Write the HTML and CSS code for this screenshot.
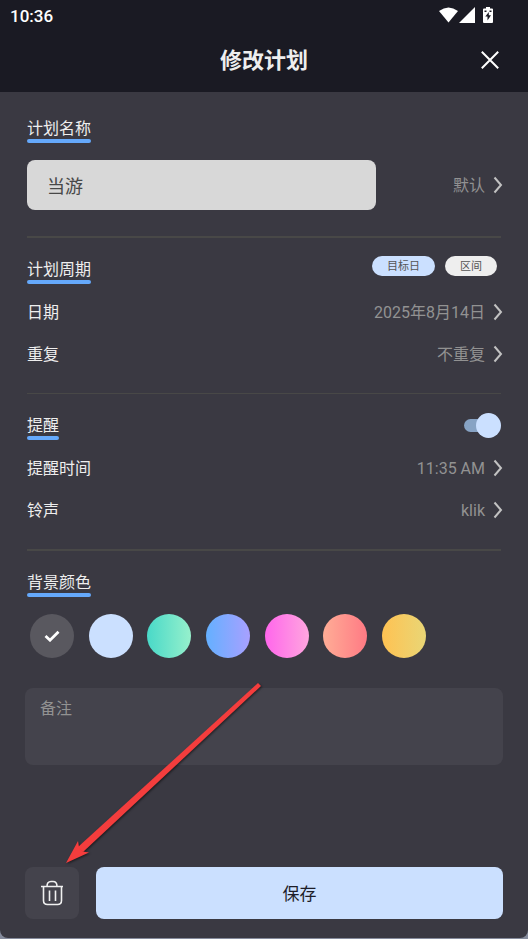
FILE: index.html
```html
<!DOCTYPE html>
<html lang="zh-CN">
<head>
<meta charset="utf-8">
<meta name="viewport" content="width=device-width, initial-scale=1">
<title>修改计划</title>
<link rel="stylesheet" href="styles.css">
</head>
<body>
<svg class="defs" aria-hidden="true"><symbol id="chevron" viewBox="0 0 10 18"><path d="M1.5 1.5 8 9 1.5 16.500" fill="none" stroke="currentColor" stroke-width="2"/></symbol></svg>
<div class="screen">
  <header class="header">
    <div class="status">
      <span class="clock">10:36</span>
      <svg class="status-icons" viewBox="0 0 56 18" aria-hidden="true">
        <g fill="#fff">
          <path d="M0 4Q9.500-3 19 4L9.500 15.500Z"/>
          <path d="M20 16 36 0V16Z"/>
          <path d="M47 0h4v1.500h2q1 0 1 1V15q0 1-1 1h-8q-1 0-1-1V2.500q0-1 1-1h2Z"/>
        </g>
        <path d="M49.800 5 46.300 9.500h2.200v4l3.500-5.300h-2.200ZM45.500 3.500h2v1.500h-2zM50.500 3.500h2v1.500h-2z" fill="#1a1a23"/>
      </svg>
    </div>
    <div class="title-bar">
      <h1>修改计划</h1>
      <button class="close" type="button" aria-label="关闭">
        <svg viewBox="0 0 18 18"><path d="M.8.8 17.200 17.200M17.200.8.8 17.200" stroke="#fff" stroke-width="2" fill="none"/></svg>
      </button>
    </div>
  </header>

  <form class="form">
    <section class="section section-name">
      <h2><label for="name">计划名称</label></h2>
      <div class="name-row">
        <input id="name" class="name" type="text" value="当游">
        <button class="value" type="button">默认<svg class="chevron"><use href="#chevron"/></svg></button>
      </div>
    </section>

    <section class="section section-period">
      <div class="section-head">
        <h2>计划周期</h2>
        <div class="pills">
          <button class="pill pill-on" type="button">目标日</button>
          <button class="pill" type="button">区间</button>
        </div>
      </div>
      <div class="rows">
        <div class="row"><span>日期</span><button class="value" type="button">2025年8月14日<svg class="chevron"><use href="#chevron"/></svg></button></div>
        <div class="row"><span>重复</span><button class="value" type="button">不重复<svg class="chevron"><use href="#chevron"/></svg></button></div>
      </div>
    </section>

    <section class="section section-remind">
      <div class="section-head">
        <h2><label for="remind">提醒</label></h2>
        <input id="remind" class="switch" type="checkbox" checked>
      </div>
      <div class="rows">
        <div class="row"><span>提醒时间</span><button class="value" type="button">11:35 AM<svg class="chevron"><use href="#chevron"/></svg></button></div>
        <div class="row"><span>铃声</span><button class="value" type="button">klik<svg class="chevron"><use href="#chevron"/></svg></button></div>
      </div>
    </section>

    <section class="section section-color">
      <h2>背景颜色</h2>
      <div class="swatches">
        <input class="swatch gray" type="radio" name="color" aria-label="灰色" checked>
        <input class="swatch sky" type="radio" name="color" aria-label="浅蓝">
        <input class="swatch green" type="radio" name="color" aria-label="绿色">
        <input class="swatch blue" type="radio" name="color" aria-label="蓝紫">
        <input class="swatch pink" type="radio" name="color" aria-label="粉色">
        <input class="swatch coral" type="radio" name="color" aria-label="珊瑚">
        <input class="swatch gold" type="radio" name="color" aria-label="金色">
        <svg class="check" viewBox="0 0 16 12" aria-hidden="true"><path d="M1.500 6 6 10.200 14.500 1.800" fill="none" stroke="#fff" stroke-width="2.800"/></svg>
      </div>
    </section>

    <textarea class="note" aria-label="备注" placeholder="备注"></textarea>

    <div class="actions">
      <button class="delete" type="button" aria-label="删除">
        <svg viewBox="0 0 24 26" fill="none" stroke="#f0f0f0" stroke-width="1.600"><path d="M1 6.500H23M3.500 6.500V20.500Q3.500 24.500 7.500 24.500H17.500Q21.500 24.500 21.500 20.500V6.500M7 6.500Q7 1.500 11 1.500H13Q17 1.500 17 6.500M9.500 10.500V21M15.500 10.500V21"/></svg>
      </button>
      <button class="save" type="submit">保存</button>
    </div>
  </form>

  <svg class="pointer" viewBox="0 0 200 184" aria-hidden="true">
    <path d="M193 1 196 4 18 170 13 165Z" fill="#f43d3d"/>
    <path d="M1 181 13 159 14 165 18 169.500 24 170.500Z" fill="#f43d3d"/>
  </svg>
</div>
</body>
</html>
```

FILE: styles.css
```css
* { box-sizing: border-box; }
body {
  margin: 0;
  background: #858b9c;
  color: #eee;
  font: 16px/20px Roboto, "Noto Sans CJK SC", sans-serif;
}
button { border: 0; padding: 0; background: none; color: inherit; font: inherit; cursor: pointer; }
h1, h2 { margin: 0; }
.defs { position: absolute; width: 0; height: 0; }
.screen {
  position: relative;
  display: flex;
  flex-direction: column;
  height: calc(100vh - 1px);
  min-height: 800px;
  background: #3a3942;
  border-radius: 0 0 8px 8px;
  overflow: hidden;
}
.header { background: #1a1a23; height: 92px; flex: none; }
.status { display: flex; align-items: center; justify-content: space-between; height: 32px; padding: 0 33px 0 10px; }
.clock { font-size: 17px; font-weight: 500; color: #fff; }
.status-icons { width: 56px; height: 18px; }
.title-bar { display: grid; grid-template-columns: 1fr auto 1fr; align-items: center; height: 56px; padding: 0 29px; }
h1 { grid-column: 2; padding-top: 2px; font-size: 22px; line-height: 32px; font-weight: 700; }
.close { justify-self: end; display: flex; }
.close svg { width: 18px; height: 18px; }

.form { flex: 1; display: flex; flex-direction: column; padding: 5px 25px 19px; }
.section { margin: 0 2px; padding-top: 22px; border-bottom: 2px solid #484847; }
.section-name { padding-bottom: 26px; }
.section-period, .section-remind { padding-bottom: 18px; }
.section-period { border-bottom-width: 1px; }
.section-color { border: 0; padding-bottom: 30px; }
h2 { position: relative; width: max-content; padding-bottom: 4px; font-size: 16px; line-height: 20px; font-weight: 400; }
h2::after { content: ""; position: absolute; inset: auto 0 0; height: 4px; border-radius: 2px; background: #65a9fb; }
.name-row { display: flex; align-items: center; justify-content: space-between; margin-top: 17px; }
.name {
  flex: 0 1 349px;
  min-width: 0;
  height: 50px;
  padding: 0 20px;
  border: 0;
  border-radius: 8px;
  background: #d8d8d8;
  color: #484848;
  font: 18px/24px Roboto, "Noto Sans CJK SC", sans-serif;
}
.value { display: flex; align-items: center; gap: 8px; margin-right: -2px; padding-top: 2px; color: #929292; }
.chevron { width: 10px; height: 18px; margin-bottom: 2px; color: #c2c2c2; }
.section-head { display: flex; align-items: flex-start; justify-content: space-between; height: 24px; }
.pills { display: flex; gap: 10px; margin: -4px 4px 0 0; }
.pill { height: 20px; padding: 1px 15px 0; border-radius: 10px; background: #eee; color: #555; font-size: 11px; line-height: 20px; }
.pill-on { background: #cbe0ff; }
.rows { margin-top: 7px; }
.row { display: flex; align-items: center; justify-content: space-between; height: 42px; }
.row span { padding-top: 2px; }
.switch { appearance: none; position: relative; width: 37px; height: 26px; margin: -3px 0 0; }
.switch::before { content: ""; position: absolute; inset: 6px 10px 7px 0; border-radius: 7px; background: #87a3c4; }
.switch::after { content: ""; position: absolute; right: 0; top: 0; width: 25px; height: 25px; border-radius: 50%; background: #cbe0ff; }
.swatches { position: relative; display: grid; grid-template-columns: repeat(7, 44px); justify-content: space-between; width: 396px; max-width: 100%; margin: 17px 3px 0; }
.swatch { appearance: none; width: 44px; height: 44px; margin: 0; border-radius: 50%; }
.check { position: absolute; left: 14px; top: 16px; width: 16px; height: 12px; pointer-events: none; }
.gray { background: #59585f; }
.sky { background: #cbe0ff; }
.green { background: linear-gradient(90deg, #49d9c8, #96f0cc); }
.blue { background: linear-gradient(90deg, #64b0ff, #a8a0ff); }
.pink { background: linear-gradient(90deg, #ff66eb, #ffa6df); }
.coral { background: linear-gradient(90deg, #ffad96, #ff7a84); }
.gold { background: linear-gradient(90deg, #ffc252, #e9d676); }
.note {
  height: 77px;
  padding: 11px 15px;
  border: 0;
  border-radius: 8px;
  resize: none;
  background: #44434c;
  color: #eee;
  font: inherit;
}
.note::placeholder { color: #929292; opacity: 1; }
.actions { display: flex; gap: 17px; margin-top: auto; }
.delete { display: grid; place-items: center; width: 54px; height: 52px; border-radius: 8px; background: #44434c; }
.delete svg { width: 24px; height: 26px; }
.save { flex: 1; height: 52px; padding-top: 2px; border-radius: 8px; background: #cbe0ff; color: #1d1d28; font-size: 17px; }
.pointer { position: absolute; left: 65px; top: 682px; width: 200px; height: 184px; pointer-events: none; filter: drop-shadow(1px 1px 1px #0008); }
```
